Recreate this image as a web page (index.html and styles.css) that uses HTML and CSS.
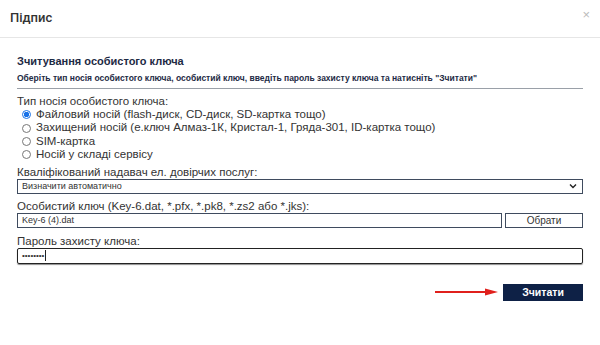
FILE: index.html
```html
<!DOCTYPE html>
<html lang="uk">
<head>
<meta charset="utf-8">
<title>Підпис</title>
<link rel="stylesheet" href="styles.css">
</head>
<body>
<div class="modal">
  <div class="modal-header">
    <span class="modal-title">Підпис</span>
    <span class="close">×</span>
  </div>
  <div class="modal-body">
    <div class="section-title">Зчитування особистого ключа</div>
    <div class="hint">Оберіть тип носія особистого ключа, особистий ключ, введіть пароль захисту ключа та натисніть "Зчитати"</div>
    <div class="rule"></div>
    <div class="label first">Тип носія особистого ключа:</div>
    <div class="radios">
      <label class="radio"><span class="dot checked"></span>Файловий носій (flash-диск, CD-диск, SD-картка тощо)</label>
      <label class="radio"><span class="dot"></span>Захищений носій (е.ключ Алмаз-1К, Кристал-1, Гряда-301, ID-картка тощо)</label>
      <label class="radio"><span class="dot"></span>SIM-картка</label>
      <label class="radio"><span class="dot"></span>Носій у складі сервісу</label>
    </div>
    <div class="label l-provider">Кваліфікований надавач ел. довірчих послуг:</div>
    <div class="field select">
      <span>Визначити автоматично</span>
      <svg class="chev" width="8" height="6" viewBox="0 0 8 6"><path d="M1 1.5 L4 4.5 L7 1.5" fill="none" stroke="#222" stroke-width="1.4"/></svg>
    </div>
    <div class="label l-key">Особистий ключ (Key-6.dat, *.pfx, *.pk8, *.zs2 або *.jks):</div>
    <div class="file-row">
      <div class="field grow"><span>Key-6 (4).dat</span></div>
      <div class="field btn-choose">Обрати</div>
    </div>
    <div class="label l-pass">Пароль захисту ключа:</div>
    <div class="field password"><span class="dots">••••••••</span><span class="caret"></span></div>
    <div class="footer">
      <svg class="arrow" width="64" height="10" viewBox="0 0 64 10"><path d="M0 5 L52 5" stroke="#e0201c" stroke-width="2"/><path d="M50 1.5 L63 5 L50 8.5 Z" fill="#e0201c"/></svg>
      <div class="btn-read">Зчитати</div>
    </div>
  </div>
</div>
</body>
</html>
```
FILE: styles.css
```css
* { box-sizing: border-box; }
html, body { margin: 0; padding: 0; background: #fff; }
body { font-family: "Liberation Sans", Arial, sans-serif; color: #333; width: 600px; height: 345px; overflow: hidden; }
.modal { width: 600px; }
.modal-header {
  height: 38px;
  border-bottom: 1px solid #e6e6e6;
  display: flex;
  align-items: center;
  justify-content: space-between;
  padding: 0 10px 2px 10px;
}
.modal-title { font-family: Roboto, "Liberation Sans", sans-serif; font-size: 13px; font-weight: 500; color: #333; }
.close { font-family: "Liberation Sans", Arial, sans-serif; font-size: 13px; color: #bbb; margin-top: -6px; }
.modal-body { padding: 16px 17px 0 17px; }
.section-title { font-size: 11px; font-weight: bold; color: #1d2a44; line-height: 15px; }
.hint { font-size: 8.5px; font-weight: bold; color: #1d2a44; margin-top: 4px; line-height: 11px; }
.rule { height: 1px; background: #9aa0a8; margin-top: 4px; }
.label { font-size: 11.5px; line-height: 14px; color: #333; }
.label.first { margin-top: 5px; }
.label.l-provider { margin-top: 3px; }
.label.l-key { margin-top: 5px; }
.label.l-pass { margin-top: 6px; }
.radios { display: flex; flex-direction: column; }
.radio { display: flex; align-items: center; font-size: 11.5px; line-height: 13.4px; color: #333; }
.dot { width: 9px; height: 9px; border-radius: 50%; border: 1px solid #777; margin: 0 5px 0 5px; flex: none; }
.dot.checked { border-color: #1a73e8; background: radial-gradient(circle, #1a73e8 0 2.5px, #fff 3px); }
.field {
  height: 15px;
  border: 1px solid #3f4b5e;
  display: flex;
  align-items: center;
  font-size: 9px;
  color: #333;
  padding: 0 4px;
}
.select { justify-content: space-between; padding-right: 5px; }
.file-row { display: flex; gap: 3px; }
.grow { flex: 1; }
.btn-choose { width: 78px; justify-content: center; font-size: 10px; color: #333; }
.password { border: 1px solid #222; border-radius: 2px; box-shadow: 0 1px 1px rgba(0,0,0,0.45); height: 16px; }
.dots { font-size: 8px; letter-spacing: 0; color: #333; }
.caret { width: 1px; height: 11px; background: #222; margin-left: 1px; }
.footer { display: flex; justify-content: flex-end; align-items: center; margin-top: 20px; gap: 4px; }
.btn-read {
  width: 80px;
  height: 17px;
  background: #0e2146;
  color: #fff;
  font-size: 10.5px;
  font-weight: bold;
  display: flex;
  align-items: center;
  justify-content: center;
}
```
